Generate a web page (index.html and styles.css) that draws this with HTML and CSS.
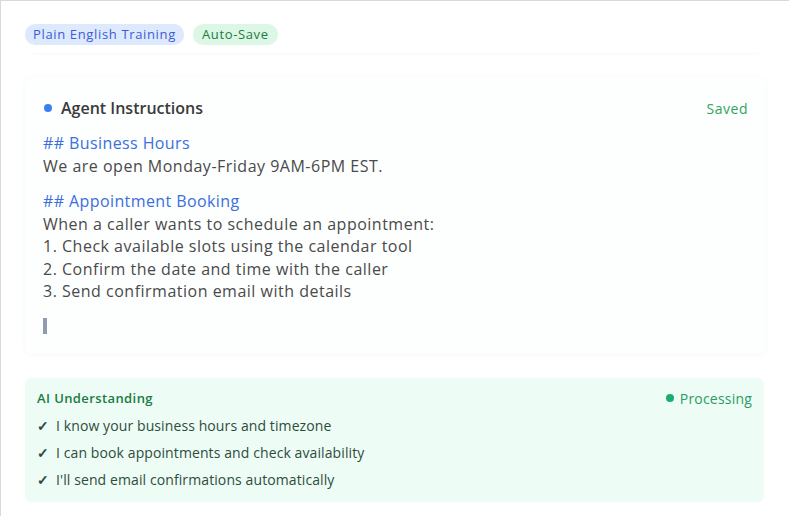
FILE: index.html
```html
<!DOCTYPE html>
<html lang="en">
<head>
    <meta charset="UTF-8">
    <meta name="viewport" content="width=device-width, initial-scale=1.0">
    <title>Agent Training</title>
    <link rel="stylesheet" href="styles.css">
</head>
<body>
    <div class="panel">
        <div class="tags">
            <span class="tag tag-blue">Plain English Training</span>
            <span class="tag tag-green">Auto-Save</span>
        </div>

        <div class="editor">
            <div class="editor-header">
                <div class="editor-title"><span class="dot dot-blue"></span>Agent Instructions</div>
                <span class="status-saved">Saved</span>
            </div>

            <div class="editor-body">
                <p class="md-heading">## Business Hours</p>
                <p>We are open Monday-Friday 9AM-6PM EST.</p>

                <p class="md-heading spaced">## Appointment Booking</p>
                <p>When a caller wants to schedule an appointment:</p>
                <p>1. Check available slots using the calendar tool</p>
                <p>2. Confirm the date and time with the caller</p>
                <p>3. Send confirmation email with details</p>

                <span class="cursor"></span>
            </div>
        </div>

        <div class="understanding">
            <div class="understanding-header">
                <span class="understanding-title">AI Understanding</span>
                <span class="status-processing"><span class="dot dot-green"></span>Processing</span>
            </div>
            <ul class="checks">
                <li><span class="tick">&#10003;</span>I know your business hours and timezone</li>
                <li><span class="tick">&#10003;</span>I can book appointments and check availability</li>
                <li><span class="tick">&#10003;</span>I'll send email confirmations automatically</li>
            </ul>
        </div>
    </div>
</body>
</html>
```

FILE: styles.css
```css
/* Global Styling */
body {
    margin: 0;
    background-color: #fff;
    font-family: "Open Sans", Arial, sans-serif;
    color: #4a4a4a;
}

/* Outer Panel */
.panel {
    height: 516px;
    box-sizing: border-box;
    border-left: 1px solid #d9d9d9;
    border-top: 1px solid #d9d9d9;
    padding: 23px 24px 0 24px;
}

/* Tags */
.tags {
    display: flex;
    gap: 9px;
    padding-bottom: 8px;
    box-shadow: 0 6px 6px -6px rgba(0, 0, 0, 0.04);
}

.tag {
    font-size: 13px;
    font-weight: 500;
    padding: 2px 8px;
    border-radius: 10px;
    line-height: 17px;
    letter-spacing: 0.65px;
}

.tag-blue {
    background-color: #dde9fd;
    color: #3d5bd6;
}

.tag-green {
    background-color: #dcf7e5;
    color: #1f7a3e;
    padding: 2px 9px;
}

/* Dots */
.dot {
    display: inline-block;
    width: 8px;
    height: 8px;
    border-radius: 50%;
    margin-right: 6px;
}

.dot-blue {
    background-color: #3b7ff0;
    margin-right: 9px;
}

.dot-green {
    background-color: #17b06b;
}

/* Editor Card */
.editor {
    margin-top: 24px;
    background-color: #fdfefe;
    border-radius: 6px;
    box-shadow: 0 1px 6px rgba(0, 0, 0, 0.035);
    padding: 20px 17px 20px 18px;
}

.editor-header {
    display: flex;
    justify-content: space-between;
    align-items: center;
    margin-bottom: 12px;
}

.editor-title {
    display: flex;
    align-items: center;
    font-size: 16px;
    font-weight: 600;
    color: #3a3a3a;
    padding-left: 1px;
}

.status-saved {
    font-size: 14px;
    color: #2fa55a;
    letter-spacing: 0.5px;
}

.editor-body {
    padding-top: 1px;
}

.editor-body p {
    margin: 0;
    font-size: 16px;
    line-height: 22.5px;
    letter-spacing: 0.5px;
}

.editor-body .md-heading {
    color: #3a6fe0;
    letter-spacing: 0.4px;
}

.editor-body .spaced {
    margin-top: 13px;
}

.cursor {
    display: block;
    width: 4px;
    height: 16px;
    margin-top: 15px;
    background-color: #8e9bb0;
}

/* AI Understanding */
.understanding {
    margin-top: 24px;
    background-color: #edfcf5;
    border-radius: 6px;
    padding: 11px 12px 9px 12px;
    margin-right: 1px;
}

.understanding-header {
    display: flex;
    justify-content: space-between;
    align-items: center;
}

.understanding-title {
    font-size: 13px;
    font-weight: 600;
    color: #1c7a45;
    letter-spacing: 0.4px;
}

.status-processing {
    display: flex;
    align-items: center;
    font-size: 14px;
    color: #2a9d62;
    letter-spacing: 0.2px;
}

.checks {
    list-style: none;
    margin: 4px 0 0 0;
    padding: 0;
}

.checks li {
    font-size: 14px;
    line-height: 27px;
    color: #2d4d3c;
    letter-spacing: 0.1px;
}

.tick {
    display: inline-block;
    width: 19px;
    font-weight: 700;
}
```
